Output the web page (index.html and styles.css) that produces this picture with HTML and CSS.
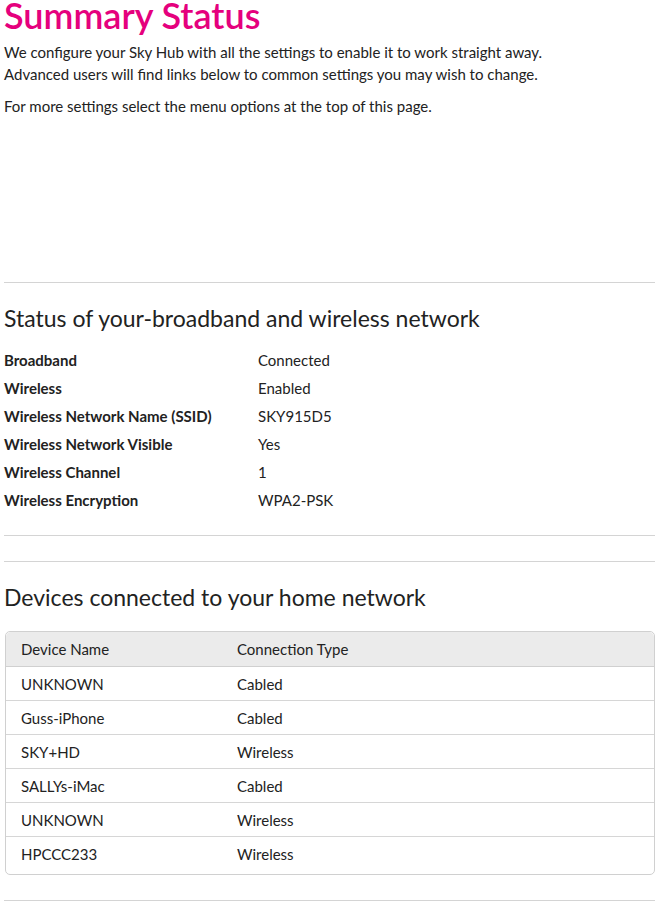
FILE: index.html
```html
<!DOCTYPE html>
<html lang="en">
<head>
    <meta charset="UTF-8">
    <title>Summary Status</title>
    <link rel="stylesheet" href="styles.css">
</head>
<body>
    <div class="page">
        <h1 class="page-title">Summary Status</h1>
        <p class="intro">We configure your Sky Hub with all the settings to enable it to work straight away.<br>Advanced users will find links below to common settings you may wish to change.</p>
        <p class="intro">For more settings select the menu options at the top of this page.</p>

        <hr class="divider first">

        <h2 class="section-title">Status of your-broadband and wireless network</h2>
        <div class="status-list">
            <div class="status-row"><span class="label">Broadband</span><span class="value">Connected</span></div>
            <div class="status-row"><span class="label">Wireless</span><span class="value">Enabled</span></div>
            <div class="status-row"><span class="label">Wireless Network Name (SSID)</span><span class="value">SKY915D5</span></div>
            <div class="status-row"><span class="label">Wireless Network Visible</span><span class="value">Yes</span></div>
            <div class="status-row"><span class="label">Wireless Channel</span><span class="value">1</span></div>
            <div class="status-row"><span class="label">Wireless Encryption</span><span class="value">WPA2-PSK</span></div>
        </div>

        <hr class="divider">
        <hr class="divider tight">

        <h2 class="section-title">Devices connected to your home network</h2>
        <div class="devices">
            <div class="device-row head"><span>Device Name</span><span>Connection Type</span></div>
            <div class="device-row"><span>UNKNOWN</span><span>Cabled</span></div>
            <div class="device-row"><span>Guss-iPhone</span><span>Cabled</span></div>
            <div class="device-row"><span>SKY+HD</span><span>Wireless</span></div>
            <div class="device-row"><span>SALLYs-iMac</span><span>Cabled</span></div>
            <div class="device-row"><span>UNKNOWN</span><span>Wireless</span></div>
            <div class="device-row"><span>HPCCC233</span><span>Wireless</span></div>
        </div>

        <hr class="divider last">
    </div>
</body>
</html>
```
FILE: styles.css
```css
body {
    margin: 0;
    background: #fff;
    color: #222;
    font-family: Lato, "Liberation Sans", sans-serif;
    font-size: 15px;
}
.page {
    width: 651px;
    padding-left: 4px;
}
.page-title {
    margin: 0 0 11px 0;
    font-size: 36px;
    line-height: 30px;
    font-weight: 600;
    color: #e5007d;
}
.intro {
    margin: 0 0 10px 0;
    line-height: 22px;
}
.divider {
    border: 0;
    border-top: 1px solid #d4d4d4;
    margin: 0;
}
.divider.first {
    margin-top: 165px;
}
.section-title {
    margin: 19px 0 12px 0;
    font-size: 23px;
    line-height: 32px;
    font-weight: 400;
}
.status-list {
    display: flex;
    flex-direction: column;
    margin-bottom: 21px;
}
.status-row {
    display: flex;
    height: 28px;
    align-items: center;
}
.status-row .label {
    width: 254px;
    font-weight: bold;
}
.divider.tight {
    margin-top: 25px;
}
.devices {
    margin: 18px 0 25px 1px;
    border: 1px solid #d0d0d0;
    border-radius: 5px;
    padding-bottom: 4px;
}
.device-row {
    display: flex;
    align-items: center;
    height: 33px;
    padding-left: 15px;
    border-top: 1px solid #d6d6d6;
}
.device-row span:first-child {
    width: 216px;
}
.device-row.head {
    border-top: 0;
    height: 34px;
    background: #ebebeb;
    border-radius: 5px 5px 0 0;
    border-bottom: 1px solid #d0d0d0;
}
.device-row.head + .device-row {
    border-top: 0;
}
```
